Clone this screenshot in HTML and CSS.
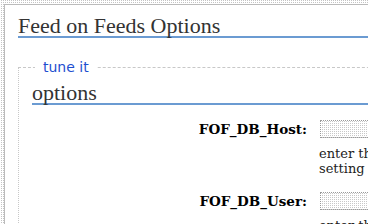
FILE: index.html
```html
<!DOCTYPE html>
<html lang="en">
<head>
  <meta charset="UTF-8" />
  <title>Feed on Feeds Options</title>
  <link rel="stylesheet" href="styles.css">
</head>
<body>
  <div class="page">
    <div class="content">
      <h1 class="title">Feed on Feeds Options</h1>

      <fieldset class="group">
        <legend>tune it</legend>
        <h2>options</h2>

        <div class="field">
          <label for="fof-db-host">FOF_DB_Host:</label>
          <div class="control">
            <input type="text" id="fof-db-host" />
            <p class="hint">enter the FOF_DB_Host setting</p>
          </div>
        </div>

        <div class="field">
          <label for="fof-db-user">FOF_DB_User:</label>
          <div class="control">
            <input type="text" id="fof-db-user" />
            <p class="hint">enter the FOF_DB_User setting</p>
          </div>
        </div>
      </fieldset>
    </div>
  </div>
</body>
</html>
```

FILE: styles.css
```css
html, body {
  margin: 0;
  overflow: hidden;
}
body {
  font-family: "DejaVu Serif", serif;
  background-color: #fff;
  color: #000;
}
/* dotted frame round the page */
.page {
  width: 640px;
  padding: 4px 0 0 4px;
  background: conic-gradient(#c4c4c4 0 25%, #fff 0) 0 0 / 2px 2px;
}
.content {
  background-color: #fff;
  border-left: 1px solid #bbb;
  border-top: 1px solid #bbb;
  padding: 10px 0 60px 13px;
}
.title, h2 {
  margin: 0;
  font: normal 22px/21px "Liberation Serif", serif;
  color: #333;
  border-bottom: 2px solid #6b9bd2;
}
.group {
  margin: 21px 0 0 0;
  padding: 0 0 0 13px;
  border: 1px dashed #c8c8c8;
  border-left-style: dotted;
}
.group legend {
  margin-left: 3px;
  padding: 0 8px;
  font: 14px "DejaVu Sans", sans-serif;
  color: #1e4fd0;
}
.group h2 {
  margin-top: 7px;
}
.field {
  display: grid;
  grid-template-columns: 275px 300px;
  column-gap: 12px;
  margin-top: 15px;
}
.field + .field {
  margin-top: 16px;
}
.field label {
  text-align: right;
  font-weight: bold;
  font-size: 13.5px;
  line-height: 15px;
  padding-top: 2px;
}
.field input {
  display: block;
  box-sizing: border-box;
  width: 150px;
  height: 18px;
  margin: 0 0 0 1px;
  padding: 0;
  border: 1px dotted #999;
  background: conic-gradient(#c8c8c8 0 25%, #fff 0) 0 0 / 2px 2px;
}
.hint {
  width: 170px;
  margin: 8px 0 0;
  font-size: 13px;
  line-height: 15px;
  color: #222;
}
```
